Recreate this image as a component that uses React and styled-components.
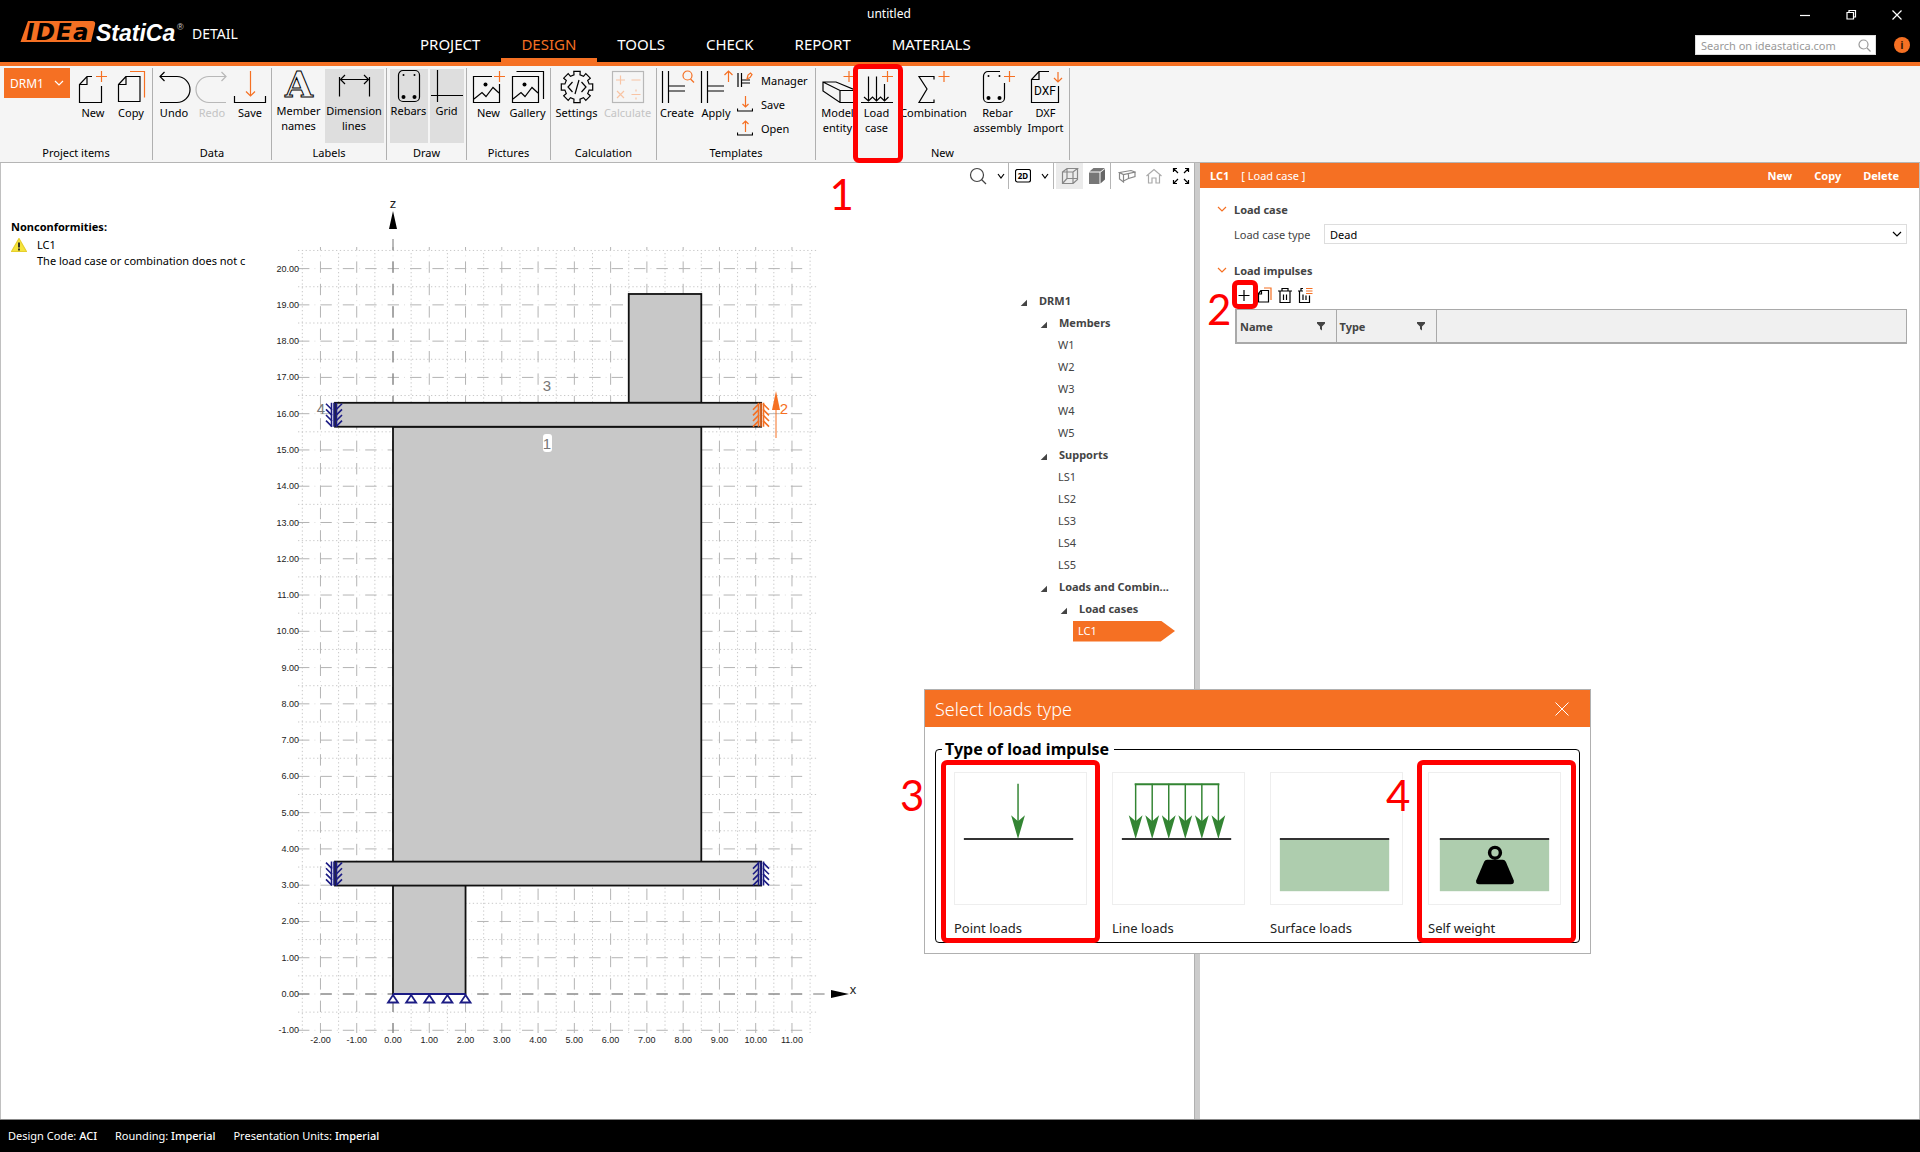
import styled, { createGlobalStyle, css } from 'styled-components';

const ORANGE = '#f57023';
const RED = '#ff0000';
const NAVY = '#1c1c84';

const GlobalStyle = createGlobalStyle`
	* {
		box-sizing: border-box;
	}

	body {
		margin: 0;
		font-family: 'Noto Sans', 'Open Sans', sans-serif;
		font-size: 11px;
		line-height: 15px;
		color: #000;
		background: #fff;
	}

	button,
	input,
	select {
		margin: 0;
		padding: 0;
		border: 0;
		background: none;
		color: inherit;
		font: inherit;
	}

	button {
		cursor: pointer;
	}

	svg {
		display: block;
		flex: none;
	}
`;

/* ---------- icons ---------- */

const Svg = ({ w = 34, h = w, color = 'currentColor', children, ...rest }) => (
	<svg width={w} height={h} viewBox={`0 0 ${w} ${h}`} fill="none" stroke={color} strokeWidth="1.2" aria-hidden="true" {...rest}>
		{children}
	</svg>
);

const Accent = ({ d }) => <path d={d} stroke={ORANGE} />;

const Plus = ({ x, y }) => <Accent d={`M${x} ${y - 5.5}v11M${x - 5.5} ${y}h11`} />;

const Chevron = ({ size = 10, color }) => (
	<Svg w={size} h={6} color={color}>
		<path d={`M1 1L${size / 2} 5L${size - 1} 1`} />
	</Svg>
);

const gearPath = (cx, cy) => {
	const points = [];
	for (let i = 0; i < 8; i++) {
		[
			[-0.24, 12.5],
			[-0.2, 16],
			[0.2, 16],
			[0.24, 12.5],
		].forEach(([shift, r]) => {
			const a = (i * Math.PI) / 4 + shift;
			points.push(`${(cx + r * Math.cos(a)).toFixed(1)} ${(cy + r * Math.sin(a)).toFixed(1)}`);
		});
	}
	return `M${points.join('L')}Z`;
};

const Dots = ({ points, r }) => points.map(([x, y]) => <circle key={`${x}-${y}`} cx={x} cy={y} r={r} fill="currentColor" stroke="none" />);

const icons = {
	newDoc: (
		<Svg>
			<path d="M16 6.5H11L3.5 14.5V32.5H25.5V16M11 6.5V14.5H3.5" />
			<Plus x={25.5} y={6.5} />
		</Svg>
	),
	copy: (
		<Svg>
			<path d="M12 6.5L4.5 14.5V31.5H26V6.5ZM12 6.5V14.5H4.5" />
			<Accent d="M16 1.5H30.5V27.5" />
		</Svg>
	),
	undo: (
		<Svg>
			<path d="M3 6.5H20A13 13 0 0 1 20 32.5H3M7.5 2L3 6.5L7.5 11" />
		</Svg>
	),
	redo: (
		<Svg>
			<path d="M31 6.5H14A13 13 0 0 0 14 32.5H31M26.5 2L31 6.5L26.5 11" stroke="#b8b8b8" />
		</Svg>
	),
	save: (
		<Svg>
			<Accent d="M17.5 1V26M13 21.5L17.5 26L22 21.5" />
			<path d="M1.5 26V32.5H32.5V26" />
		</Svg>
	),
	names: (
		<Svg>
			<text x="17" y="28" textAnchor="middle" fontFamily="DejaVu Serif" fontWeight="700" fontSize="36" strokeWidth="1">
				A
			</text>
		</Svg>
	),
	dimension: (
		<Svg>
			<path d="M2.5 8V27.5M32.5 8V27.5M3 10.5H32M8 6L3.5 10.5L8 15M27 6L31.5 10.5L27 15" />
		</Svg>
	),
	rebars: (
		<Svg>
			<rect x="6.5" y="1.5" width="21" height="31" rx="4.5" />
			<Dots points={[[11.5, 6], [22.5, 6]]} r={1} />
			<Dots points={[[11.5, 28], [22.5, 28]]} r={2} />
		</Svg>
	),
	grid: (
		<Svg>
			<path d="M7.5 1V33M1 26.5H33" />
		</Svg>
	),
	picture: (
		<Svg>
			<path d="M20 6.5H1.5V32.5H27.5V14M2 29L10 22.5L14 26.5L21 17.5L27 23" />
			<Dots points={[[13.5, 14.5]]} r={2} />
			<Plus x={27.5} y={6.5} />
		</Svg>
	),
	gallery: (
		<Svg>
			<path d="M1.5 6.5H27.5V32.5H1.5ZM2 29L10 22.5L14 26.5L21 17.5L27 23M5.5 1.5H32.5V29" />
			<Dots points={[[13.5, 14.5]]} r={2} />
		</Svg>
	),
	settings: (
		<Svg>
			<path d={gearPath(17, 17)} />
			<path d="M12.5 12L8 17L12.5 22M21.5 12L26 17L21.5 22M19 10L15 24" />
		</Svg>
	),
	calculate: (
		<Svg>
			<rect x="1.5" y="1.5" width="31" height="31" stroke="#b8b8b8" />
			<path d="M9.5 5.5v9M5 10h9M20.5 10h9M6 21l7 7M13 21l-7 7M20.5 24.5h9M25 19.5v2M25 27.5v2" stroke="#f8c4a4" />
		</Svg>
	),
	create: (
		<Svg w={36} h={34}>
			<path d="M3.5 1V33M9.5 1V33M9.5 16H26M9.5 21H26" />
			<circle cx="28.5" cy="5.5" r="4.5" stroke={ORANGE} />
			<Accent d="M31.5 9L35 12.5" />
		</Svg>
	),
	apply: (
		<Svg>
			<path d="M2.5 1V33M8.5 1V33M8.5 16H25M8.5 21H25" />
			<Accent d="M29.5 1V12M25.5 5L29.5 1L33.5 5" />
		</Svg>
	),
	entity: (
		<Svg>
			<path d="M2 12H15L34 20V32.5H19L2 21ZM2 12L19 20.5H34M19 20.5V32.5" />
			<Plus x={28} y={6.5} />
		</Svg>
	),
	loadCase: (
		<Svg>
			<path d="M1 32.5H33M8.5 6.5V31M16.5 6.5V31M24.5 14V31M4 27L8.5 31L12.5 27L16.5 31L20.5 27L24.5 31L28.5 27" />
			<Plus x={27.5} y={6.5} />
		</Svg>
	),
	combination: (
		<Svg>
			<path d="M17 9.5V6.5H2L10 19L2 32.5H17V29.5" />
			<Plus x={27} y={6.5} />
		</Svg>
	),
	rebarAssembly: (
		<Svg>
			<path d="M19 1.5H7A4.5 4.5 0 0 0 2.5 6V28A4.5 4.5 0 0 0 7 32.5H19A4.5 4.5 0 0 0 23.5 28V13" />
			<Dots points={[[7.5, 6], [18.5, 6]]} r={1} />
			<Dots points={[[7.5, 28], [18.5, 28]]} r={2} />
			<Plus x={28.5} y={6.5} />
		</Svg>
	),
	dxf: (
		<Svg>
			<path d="M20 1.5H10L2.5 9.5V32.5H29.5V16M10 1.5V9.5H2.5" />
			<text x="16" y="25" textAnchor="middle" fontFamily="Liberation Sans Narrow, Roboto" fontSize="12" fill="currentColor" stroke="none">
				DXF
			</text>
			<Accent d="M29 2V12M25 8L29 12L33 8" />
		</Svg>
	),
	manager: (
		<Svg w={16}>
			<path d="M1 1V15M4.5 1V15M4.5 8H13M4.5 11H13" />
			<path d="M10 7L11 3L13.5 1L15 2.5L13 5.5Z" stroke={ORANGE} />
		</Svg>
	),
	saveSmall: (
		<Svg w={16}>
			<Accent d="M8.5 0V11M5.5 8L8.5 11L11.5 8" />
			<path d="M0.5 12.5V15H15.5V12.5" />
		</Svg>
	),
	openSmall: (
		<Svg w={16}>
			<Accent d="M8.5 12V1M5.5 4L8.5 1L11.5 4" />
			<path d="M0.5 12.5V15H15.5V12.5" />
		</Svg>
	),
	search: (
		<Svg w={18} color="#444">
			<circle cx="8" cy="8" r="6.5" />
			<path d="M12.5 12.5L17 17" />
		</Svg>
	),
	mode2d: (
		<Svg w={16} h={14}>
			<rect x="0.5" y="0.5" width="15" height="12.5" rx="2" />
			<text x="8" y="10" textAnchor="middle" fontFamily="Noto Sans" fontSize="8" fontWeight="700" fill="currentColor" stroke="none">
				2D
			</text>
		</Svg>
	),
	wireCube: (
		<Svg w={18} color="#888">
			<path d="M1.5 5H12V16.5H1.5ZM1.5 5L6 1.5H16.5L12 5M16.5 1.5V12.5L12 16.5M6 1.5V11.5H16.5M6 11.5L1.5 16.5" />
		</Svg>
	),
	solidCube: (
		<Svg w={18}>
			<path d="M1 5.5H11.5V17H1Z" fill="#777" stroke="none" />
			<path d="M1.5 4.5L5.5 1H17L12.5 4.5Z" fill="#777" stroke="none" />
			<path d="M12.5 5.5L17 2V12.5L12.5 16.5Z" fill="#666" stroke="none" />
		</Svg>
	),
	section: (
		<Svg w={18} h={14} color="#888">
			<path d="M1.5 3.5L13 1.5L17 3L5.5 5.5ZM1.5 3.5V10L5.5 13V5.5M5.5 12L10.5 9.5V4.5M17 3V7.5L10.5 9.5" />
		</Svg>
	),
	home: (
		<Svg w={16} color="#aaa">
			<path d="M0.5 8L8 1.5L15.5 8M2.5 7V15H6V10H10V15H13.5V7" />
		</Svg>
	),
	fullscreen: (
		<Svg w={18}>
			<path d="M1.5 5V1.5H5M1.5 1.5L6 6M13 1.5H16.5V5M16.5 1.5L12 6M1.5 13V16.5H5M1.5 16.5L6 12M13 16.5H16.5V13M16.5 16.5L12 12" />
		</Svg>
	),
	add: (
		<Svg w={14} h={16}>
			<path d="M7 3V14M1.5 8.5H12.5" />
		</Svg>
	),
	copySmall: (
		<Svg w={16}>
			<path d="M4 3.5L1.5 6.5V15H11.5V3.5ZM4.5 3.5V7H1.5" />
			<Accent d="M7 1H14V13" />
		</Svg>
	),
	trash: (
		<Svg w={16}>
			<path d="M1 4H15M5 4V1.5H11V4M3 4V15.5H13V4M6.5 7.5V13M9.5 7.5V13" />
		</Svg>
	),
	trashAll: (
		<Svg w={16}>
			<path d="M1 4H6M4 4V1.5H6M2.5 4V15.5H12.5V8.5M6 7.5V13M9 8.5V13" />
			<Accent d="M9 1.5H15.5M9 4H15.5M9 6.5H15.5" />
		</Svg>
	),
	filter: (
		<Svg w={10}>
			<path d="M1 1H9V2.5L6 5.5V9.5L4 8V5.5L1 2.5Z" fill="currentColor" stroke="none" />
		</Svg>
	),
	warning: (
		<Svg w={16} h={14}>
			<path d="M8 0.5L15.5 13.5H0.5Z" fill="#f5e43c" stroke="#e6cf2e" />
			<path d="M8 4.5V9.5M8 10.5V12.5" stroke="#222" strokeWidth="1.8" />
		</Svg>
	),
};

/* ---------- numbered callouts ---------- */

const CalloutFrame = styled.span`
	position: absolute;
	z-index: 3;
	inset: ${({ $inset }) => $inset};
	border: 5px solid ${RED};
	border-radius: 6px;
	pointer-events: none;
`;

const CalloutNumber = styled.span`
	position: absolute;
	left: ${({ $left }) => $left}px;
	top: ${({ $top }) => $top}px;
	font: 400 42px/42px Lato, sans-serif;
	color: ${RED};
`;

const Callout = ({ number, inset, left, top }) => (
	<CalloutFrame $inset={inset} aria-hidden="true">
		<CalloutNumber $left={left} $top={top}>
			{number}
		</CalloutNumber>
	</CalloutFrame>
);

/* ---------- header ---------- */

const Header = styled.header`
	display: grid;
	grid-template-columns: 400px 1fr auto;
	height: 66px;
	border-bottom: 4px solid ${ORANGE};
	background: #000;
	color: #fff;
`;

const Brand = styled.div`
	display: flex;
	align-items: center;
	padding: 2px 0 0 20px;
`;

const Product = styled.span`
	padding: 4px 0 0 7px;
	font-size: 14px;
	line-height: 18px;
`;

const HeaderMain = styled.div`
	display: flex;
	flex-direction: column;
	justify-content: space-between;
`;

const DocumentTitle = styled.div`
	padding: 5px 0 0 467px;
	font-size: 12px;
	line-height: 18px;
`;

const Tabs = styled.nav`
	display: flex;
`;

const Tab = styled.button`
	height: 32px;
	padding: 1px 21px 2px 20px;
	border-bottom: 4px solid transparent;
	font-size: 15px;
	line-height: 20px;
	${({ $active }) =>
		$active &&
		css`
			border-color: ${ORANGE};
			color: ${ORANGE};
		`}
`;

const HeaderSide = styled.div`
	display: flex;
	flex-direction: column;
	gap: 13px;
	padding: 8px 10px 0 0;
`;

const WindowButtons = styled.div`
	display: flex;
	justify-content: flex-end;
	gap: 32px;
	padding-right: 6px;
`;

const SearchRow = styled.div`
	display: flex;
	align-items: center;
	gap: 18px;
`;

const SearchBox = styled.label`
	display: flex;
	align-items: center;
	width: 181px;
	height: 20px;
	padding: 0 4px 0 5px;
	border: 1px solid #ddd;
	background: #fff;
	color: #999;

	input {
		flex: 1;
		min-width: 0;
		outline: 0;
		color: #333;
	}

	input::placeholder {
		color: #999;
		opacity: 1;
	}
`;

const InfoButton = styled.button`
	width: 16px;
	height: 16px;
	border-radius: 50%;
	background: ${ORANGE};
	color: #3a1a05;
	font-weight: 700;
	line-height: 16px;
`;

const Logo = () => (
	<svg width="165" height="26" viewBox="0 0 165 26" role="img" aria-label="IDEA StatiCa">
		<path d="M8 2H72Q76 2 75 6L71 23H0.5Z" fill={ORANGE} />
		<text x="6 16 36 53" y="21" fill="#000" fontFamily="DejaVu Sans" fontWeight="700" fontStyle="italic" fontSize="23">
			IDEa
		</text>
		<text x="76" y="22" fill="#fff" fontFamily="Liberation Sans" fontWeight="700" fontStyle="italic" fontSize="23">
			StatiCa
		</text>
		<text x="157" y="11" fill="#ccc" fontFamily="Liberation Sans" fontSize="9">
			®
		</text>
	</svg>
);

const tabs = ['PROJECT', 'DESIGN', 'TOOLS', 'CHECK', 'REPORT', 'MATERIALS'];

const AppHeader = () => (
	<Header>
		<Brand>
			<Logo />
			<Product>DETAIL</Product>
		</Brand>
		<HeaderMain>
			<DocumentTitle>untitled</DocumentTitle>
			<Tabs>
				{tabs.map((tab) => (
					<Tab key={tab} $active={tab === 'DESIGN'}>
						{tab}
					</Tab>
				))}
			</Tabs>
		</HeaderMain>
		<HeaderSide>
			<WindowButtons>
				<button aria-label="Minimize">
					<Svg w={14} h={14}>
						<path d="M2 7.5H12" />
					</Svg>
				</button>
				<button aria-label="Restore">
					<Svg w={14} h={14}>
						<path d="M3 4.5H9.5V11H3ZM5 4.5V2.5H11.5V9H9.5" />
					</Svg>
				</button>
				<button aria-label="Close">
					<Svg w={14} h={14}>
						<path d="M2.5 2.5L11.5 11.5M11.5 2.5L2.5 11.5" />
					</Svg>
				</button>
			</WindowButtons>
			<SearchRow>
				<SearchBox>
					<input type="search" placeholder="Search on ideastatica.com" aria-label="Search on ideastatica.com" />
					<Svg w={13}>
						<circle cx="5.5" cy="5.5" r="4.5" />
						<path d="M9 9L12.5 12.5" />
					</Svg>
				</SearchBox>
				<InfoButton aria-label="Info">i</InfoButton>
			</SearchRow>
		</HeaderSide>
	</Header>
);

/* ---------- ribbon ---------- */

const Ribbon = styled.div`
	display: flex;
	height: 97px;
	padding: 2px 0;
	border-bottom: 1px solid #b5b5b5;
	background: #f5f5f5;
`;

const Group = styled.section`
	display: flex;
	flex-direction: column;
	justify-content: space-between;
	flex: none;
	width: ${({ $width }) => $width}px;
	border-right: 1px solid #b0b0b0;
`;

const GroupItems = styled.div`
	display: flex;
	justify-content: center;
	align-items: flex-start;
	gap: ${({ $gap = 0 }) => $gap}px;
`;

const GroupLabel = styled.h2`
	margin: 0;
	font-size: 11px;
	font-weight: 400;
	line-height: 15px;
	text-align: center;
`;

const RibbonButton = styled.button`
	position: relative;
	display: flex;
	flex-direction: column;
	align-items: center;
	gap: ${({ $tight }) => ($tight ? 0 : 1)}px;
	flex: none;
	width: ${({ $width = 38 }) => $width}px;
	height: 74px;
	margin-top: 1px;
	padding-top: ${({ $tight }) => ($tight ? 0 : 1)}px;
	background: ${({ $pressed }) => ($pressed ? '#dedede' : 'none')};
	color: ${({ disabled }) => (disabled ? '#c4c4c4' : '#000')};
	line-height: 15px;
	white-space: pre-line;
`;

const ProjectSelect = styled.label`
	position: relative;
	display: flex;
	align-items: center;
	width: 66px;
	height: 30px;
	margin: 0 4px 0 2px;
	background: ${ORANGE};
	color: #fff;
	font-size: 12px;

	select {
		width: 100%;
		height: 100%;
		padding-left: 6px;
		appearance: none;
	}

	svg {
		position: absolute;
		right: 6px;
	}
`;

const SmallButtons = styled.div`
	display: flex;
	flex-direction: column;
	padding-left: 2px;
`;

const SmallButton = styled.button`
	display: flex;
	align-items: center;
	gap: 8px;
	width: 78px;
	height: 24px;
`;

const ribbonGroups = [
	{
		title: 'Project items',
		width: 153,
		items: [
			{ label: 'New', icon: 'newDoc' },
			{ label: 'Copy', icon: 'copy' },
		],
		lead: (
			<ProjectSelect>
				<select aria-label="Project item" defaultValue="DRM1">
					<option>DRM1</option>
				</select>
				<Chevron />
			</ProjectSelect>
		),
	},
	{
		title: 'Data',
		width: 119,
		items: [
			{ label: 'Undo', icon: 'undo' },
			{ label: 'Redo', icon: 'redo', disabled: true },
			{ label: 'Save', icon: 'save' },
		],
	},
	{
		title: 'Labels',
		width: 115,
		gap: 2,
		items: [
			{ label: 'Member\nnames', icon: 'names', tight: true, width: 48 },
			{ label: 'Dimension\nlines', icon: 'dimension', tight: true, pressed: true, width: 59 },
		],
	},
	{
		title: 'Draw',
		width: 80,
		gap: 2,
		items: [
			{ label: 'Rebars', icon: 'rebars', tight: true, pressed: true },
			{ label: 'Grid', icon: 'grid', tight: true, pressed: true, width: 34 },
		],
	},
	{
		title: 'Pictures',
		width: 84,
		items: [
			{ label: 'New', icon: 'picture' },
			{ label: 'Gallery', icon: 'gallery', width: 40 },
		],
	},
	{
		title: 'Calculation',
		width: 106,
		items: [
			{ label: 'Settings', icon: 'settings', width: 48 },
			{ label: 'Calculate', icon: 'calculate', disabled: true, width: 54 },
		],
	},
	{
		title: 'Templates',
		width: 159,
		items: [
			{ label: 'Create', icon: 'create', width: 40 },
			{ label: 'Apply', icon: 'apply' },
		],
		tail: [
			{ label: 'Manager', icon: 'manager' },
			{ label: 'Save', icon: 'saveSmall' },
			{ label: 'Open', icon: 'openSmall' },
		],
	},
	{
		title: 'New',
		width: 254,
		items: [
			{ label: 'Model\nentity', icon: 'entity', width: 40 },
			{
				label: 'Load\ncase',
				icon: 'loadCase',
				callout: <Callout number="1" inset="-5px -7px -20px -5px" left={-28} top={104} />,
			},
			{ label: 'Combination', icon: 'combination', width: 76 },
			{ label: 'Rebar\nassembly', icon: 'rebarAssembly', width: 52 },
			{ label: 'DXF\nImport', icon: 'dxf', width: 44 },
		],
	},
];

const AppRibbon = () => (
	<Ribbon>
		{ribbonGroups.map((group) => (
			<Group key={group.title} $width={group.width}>
				<GroupItems $gap={group.gap}>
					{group.lead}
					{group.items.map((item) => (
						<RibbonButton key={item.icon} $width={item.width} $tight={item.tight} $pressed={item.pressed} disabled={item.disabled}>
							{icons[item.icon]}
							{item.label}
							{item.callout}
						</RibbonButton>
					))}
					{group.tail && (
						<SmallButtons>
							{group.tail.map((item) => (
								<SmallButton key={item.icon}>
									{icons[item.icon]}
									{item.label}
								</SmallButton>
							))}
						</SmallButtons>
					)}
				</GroupItems>
				<GroupLabel>{group.title}</GroupLabel>
			</Group>
		))}
	</Ribbon>
);

/* ---------- drawing ---------- */

const UNIT = 36.27;
const px = (value) => value * UNIT;
const range = (from, to) => Array.from({ length: to - from + 1 }, (_, i) => from + i);

const LEFT = -95;
const TOP = -747;
const BOTTOM = 39;
const DASH = '11.4 11';
const DOT = '0 16.4 1 5';

const majorLines = [
	...range(-2, 11).map((n) => ({ d: `M${px(n)} ${TOP}V${BOTTOM}`, offset: 8 })),
	...range(-1, 20).map((n) => ({ d: `M${LEFT} ${-px(n)}H412`, offset: 0 })),
];

const Grid = () => (
	<g fill="none">
		<g stroke="#c8c8c8" strokeDasharray="1.3 2.5">
			{range(-3, 11).map((n) => (
				<path key={`x${n}`} d={`M${px(n + 0.5)} ${TOP + 6}V${BOTTOM}`} />
			))}
			{range(-1, 20).map((n) => (
				<path key={`z${n}`} d={`M${LEFT} ${-px(n + 0.5)}H424`} />
			))}
		</g>
		{majorLines.map(({ d, offset }) => (
			<g key={d} strokeDashoffset={offset}>
				<path d={d} stroke="#b4b4b4" strokeDasharray={DASH} />
				<path d={d} stroke="#ddd" strokeDasharray={DOT} />
			</g>
		))}
		<g stroke="#777" strokeDasharray={DASH}>
			<path d={`M0 -755V${BOTTOM}`} />
			<path d={`M${LEFT} 0H436`} />
		</g>
	</g>
);

// herringbone mark of a line support, `flip` turns the strokes the other way
const LineSupport = ({ x, z, color = NAVY, flip = false }) => {
	const y = -px(z);
	return (
		<g stroke={color} strokeWidth="1.6" fill="none">
			<path d={`M${x - 2.5} ${y}V${y + 24}M${x} ${y}V${y + 24}M${x + 2.5} ${y}V${y + 24}`} />
			{range(0, 3).map((n) => {
				const top = y + n * 5.6;
				return flip ? (
					<path key={n} d={`M${x - 8} ${top + 7}L${x - 2} ${top + 1}M${x + 2} ${top + 1}L${x + 8} ${top + 7}`} />
				) : (
					<path key={n} d={`M${x - 8} ${top + 1}L${x - 2} ${top + 7}M${x + 8} ${top + 1}L${x + 2} ${top + 7}`} />
				);
			})}
		</g>
	);
};

const bodies = [
	{ x: 6.5, z: 19.3, w: 2, h: 3 },
	{ x: 0, z: 15.64, w: 8.5, h: 12 },
	{ x: 0, z: 3, w: 2, h: 3 },
	{ x: -1.6, z: 16.3, w: 11.75, h: 0.66 },
	{ x: -1.6, z: 3.65, w: 11.75, h: 0.66 },
];

const Drawing = () => (
	<svg width="620" height="870" viewBox="-144 -805 620 870" role="img" aria-label="Wall model">
		<Grid />
		<g fontFamily="Liberation Sans" fontSize="9" fill="#222">
			{range(-1, 20).map((n) => (
				<text key={n} x="-94" y={3 - px(n)} textAnchor="end">
					{n.toFixed(2)}
				</text>
			))}
			{range(-2, 11).map((n) => (
				<text key={n} x={px(n)} y="49" textAnchor="middle">
					{n.toFixed(2)}
				</text>
			))}
		</g>
		<g fontFamily="Liberation Sans" fontSize="13" fill="#222" textAnchor="middle">
			<text x="0" y="-786">
				z
			</text>
			<text x="460" y="0">
				x
			</text>
		</g>
		<path d="M0 -783L4 -765H-4ZM456 0L438 4V-4Z" fill="#000" />
		{bodies.map(({ x, z, w, h }) => (
			<rect key={`${x}:${z}`} x={px(x)} y={-px(z)} width={px(w)} height={px(h)} fill="#c8c8c8" stroke="#111" strokeWidth="1.8" />
		))}
		<g fontFamily="Liberation Sans" fontSize="15" fill="#777" textAnchor="middle">
			<text x="154" y="-603">
				3
			</text>
			<rect x="150" y="-560" width="9" height="18" rx="3" fill="#fff" />
			<text x="154" y="-545">
				1
			</text>
			<text x="-72" y="-580">
				4
			</text>
			<text x="391" y="-580" fill={ORANGE}>
				2
			</text>
		</g>
		<LineSupport x={-59} z={16.3} />
		<LineSupport x={-59} z={3.65} />
		<LineSupport x={368} z={3.65} flip />
		<LineSupport x={368} z={16.3} color={ORANGE} flip />
		<path d="M383 -603L387 -584H379Z" fill={ORANGE} />
		<path d="M383 -590V-556" stroke={ORANGE} />
		<g stroke={NAVY} strokeWidth="1.8" fill="none">
			<path d={`M0 0H${px(2)}`} />
			{range(0, 4).map((n) => (
				<path key={n} d={`M${px(n / 2)} 1L${px(n / 2) + 5} 8.5H${px(n / 2) - 5}Z`} fill="#fff" />
			))}
		</g>
	</svg>
);

/* ---------- workspace ---------- */

const Page = styled.div`
	display: flex;
	flex-direction: column;
	min-height: 100vh;
	position: relative;
`;

const Workspace = styled.main`
	display: flex;
	flex: 1;
	border-left: 1px solid #c0c0c0;
`;

const View = styled.section`
	display: flex;
	flex-direction: column;
	flex: 1;
	min-width: 0;
`;

const ViewToolbar = styled.div`
	display: flex;
	justify-content: flex-end;
	height: 26px;
`;

const ToolGroup = styled.div`
	display: flex;
	padding-left: 2px;

	& + & {
		border-left: 1px solid #b5b5b5;
	}
`;

const ToolButton = styled.button`
	display: flex;
	align-items: center;
	justify-content: center;
	gap: 10px;
	width: ${({ $width = 27 }) => $width}px;
	background: ${({ $pressed }) => ($pressed ? '#ebebeb' : 'none')};
`;

const Stage = styled.div`
	display: flex;
	flex: 1;
`;

const Nonconformities = styled.aside`
	flex: none;
	width: 248px;
	padding: 30px 0 0 10px;
	line-height: 16px;
`;

const AsideTitle = styled.h2`
	margin: 0 0 2px;
	font-size: 11px;
	font-weight: 700;
	line-height: 16px;
`;

const Issue = styled.div`
	display: grid;
	grid-template-columns: 26px 1fr;
	overflow: hidden;
	white-space: nowrap;

	svg {
		grid-row: span 2;
		margin-top: 1px;
	}
`;

const Tree = styled.ul`
	flex: none;
	width: 174px;
	margin: 0 0 0 auto;
	padding: 101px 0 0;
	list-style: none;
	line-height: 22px;
	color: #444;
`;

const TreeRow = styled.li`
	display: flex;
	align-items: center;
	gap: 12px;
	height: 22px;
	padding-left: ${({ $level }) => $level * 20}px;
	font-weight: ${({ $bold }) => ($bold ? 700 : 400)};

	&::before {
		content: '';
		display: ${({ $bold }) => ($bold ? 'block' : 'none')};
		width: 7px;
		height: 7px;
		margin-top: 3px;
		background: #444;
		clip-path: polygon(100% 10%, 100% 100%, 10% 100%);
	}
`;

const LeafLabel = styled.span`
	margin-left: -2px;
`;

const SelectedNode = styled.span`
	width: 102px;
	height: 21px;
	margin-left: -7px;
	padding-left: 5px;
	background: ${ORANGE};
	clip-path: polygon(0 0, 86% 0, 100% 50%, 86% 100%, 0 100%);
	color: #fff;
	line-height: 20px;
`;

const leaves = (names) => names.map((label) => ({ label, level: 2 }));

const treeRows = [
	{ label: 'DRM1', level: 0, bold: true },
	{ label: 'Members', level: 1, bold: true },
	...leaves(['W1', 'W2', 'W3', 'W4', 'W5']),
	{ label: 'Supports', level: 1, bold: true },
	...leaves(['LS1', 'LS2', 'LS3', 'LS4', 'LS5']),
	{ label: 'Loads and Combin...', level: 1, bold: true },
	{ label: 'Load cases', level: 2, bold: true },
	{ label: 'LC1', level: 3, selected: true },
];

const ModelView = () => (
	<View>
		<ViewToolbar>
			<ToolGroup>
				<ToolButton $width={42} aria-label="Zoom">
					{icons.search}
					<Chevron size={8} />
				</ToolButton>
			</ToolGroup>
			<ToolGroup>
				<ToolButton $width={42} aria-label="View mode">
					{icons.mode2d}
					<Chevron size={8} />
				</ToolButton>
			</ToolGroup>
			<ToolGroup>
				<ToolButton $pressed aria-label="Wireframe">
					{icons.wireCube}
				</ToolButton>
				<ToolButton aria-label="Solid">{icons.solidCube}</ToolButton>
			</ToolGroup>
			<ToolGroup>
				<ToolButton aria-label="Section">{icons.section}</ToolButton>
				<ToolButton aria-label="Home view">{icons.home}</ToolButton>
				<ToolButton aria-label="Full screen">{icons.fullscreen}</ToolButton>
			</ToolGroup>
		</ViewToolbar>
		<Stage>
			<Nonconformities>
				<AsideTitle>Nonconformities:</AsideTitle>
				<Issue>
					{icons.warning}
					<span>LC1</span>
					<span>The load case or combination does not c</span>
				</Issue>
			</Nonconformities>
			<Drawing />
			<Tree>
				{treeRows.map(({ label, level, bold, selected }) => (
					<TreeRow key={label} $level={level} $bold={bold}>
						{selected && <SelectedNode>{label}</SelectedNode>}
						{!selected && (bold ? label : <LeafLabel>{label}</LeafLabel>)}
					</TreeRow>
				))}
			</Tree>
		</Stage>
	</View>
);

/* ---------- properties ---------- */

const Splitter = styled.div`
	flex: none;
	width: 6px;
	border-left: 1px solid #b0b0b0;
	background: #ccc;
`;

const Properties = styled.section`
	flex: none;
	width: 720px;
	border-right: 1px solid #c0c0c0;
	color: #444;
`;

const PropertiesHeader = styled.header`
	display: flex;
	align-items: center;
	height: 25px;
	padding: 0 20px 0 10px;
	background: ${ORANGE};
	color: #fff;

	h2 {
		margin: 0 12px 0 0;
		font-size: 11px;
	}
`;

const HeaderActions = styled.div`
	display: flex;
	gap: 22px;
	margin-left: auto;
	font-weight: 700;
`;

const PropertiesBody = styled.div`
	padding: 13px 12px 0 17px;
`;

const SectionTitle = styled.h3`
	display: flex;
	align-items: center;
	gap: 7px;
	height: 16px;
	margin: 0;
	font-size: 11px;
	font-weight: 700;
`;

const Field = styled.label`
	display: flex;
	align-items: center;
	margin: 7px 0 18px;
	padding-left: 17px;
`;

const FieldName = styled.span`
	width: 90px;
`;

const SelectWrap = styled.span`
	position: relative;
	display: flex;
	align-items: center;
	flex: 1;
	height: 20px;
	border: 1px solid #ddd;
	color: #000;

	select {
		width: 100%;
		height: 18px;
		padding-left: 5px;
		appearance: none;
	}

	svg {
		position: absolute;
		right: 4px;
	}
`;

const TableTools = styled.div`
	display: flex;
	gap: 5px;
	padding: 9px 0 6px 20px;
	color: #000;

	button {
		position: relative;
		width: 15px;
		height: 16px;
	}
`;

const ImpulseTable = styled.table`
	width: calc(100% - 18px);
	margin-left: 18px;
	border-collapse: collapse;
	border: 1px solid #a9a9a9;
	border-width: 1px 1px 2px 2px;
	background: #f0f0f0;

	th {
		height: 33px;
		padding: 0;
		border-right: 1px solid #a9a9a9;
		text-align: left;
	}
`;

const ColumnHead = styled.div`
	display: flex;
	align-items: center;
	justify-content: space-between;
	padding: 1px 10px 0 3px;
`;

const LoadCaseProperties = () => (
	<Properties>
		<PropertiesHeader>
			<h2>LC1</h2>
			<span>[ Load case ]</span>
			<HeaderActions>
				<button>New</button>
				<button>Copy</button>
				<button>Delete</button>
			</HeaderActions>
		</PropertiesHeader>
		<PropertiesBody>
			<SectionTitle>
				<Chevron color={ORANGE} />
				Load case
			</SectionTitle>
			<Field>
				<FieldName>Load case type</FieldName>
				<SelectWrap>
					<select defaultValue="Dead">
						<option>Dead</option>
					</select>
					<Chevron />
				</SelectWrap>
			</Field>
			<SectionTitle>
				<Chevron color={ORANGE} />
				Load impulses
			</SectionTitle>
			<TableTools>
				<button aria-label="Add">
					{icons.add}
					<Callout number="2" inset="-7px -6px -6px -5px" left={-30} top={3} />
				</button>
				<button aria-label="Copy">{icons.copySmall}</button>
				<button aria-label="Delete">{icons.trash}</button>
				<button aria-label="Delete all">{icons.trashAll}</button>
			</TableTools>
			<ImpulseTable>
				<colgroup>
					<col width="100" />
					<col width="100" />
					<col />
				</colgroup>
				<thead>
					<tr>
						{['Name', 'Type'].map((name) => (
							<th key={name} scope="col">
								<ColumnHead>
									{name}
									<button aria-label={`Filter ${name}`}>{icons.filter}</button>
								</ColumnHead>
							</th>
						))}
						<th aria-label="Empty" />
					</tr>
				</thead>
			</ImpulseTable>
		</PropertiesBody>
	</Properties>
);

/* ---------- dialog ---------- */

const DialogWindow = styled.section`
	position: absolute;
	z-index: 2;
	left: 924px;
	top: 689px;
	width: 667px;
	border: 1px solid #b0b0b0;
	background: #fff;
`;

const DialogHeader = styled.header`
	display: flex;
	align-items: center;
	justify-content: space-between;
	height: 37px;
	padding: 0 21px 0 10px;
	background: ${ORANGE};
	color: #fff;

	h2 {
		margin: 0;
		font-size: 18px;
		font-weight: 300;
		line-height: 22px;
	}
`;

const TypeFieldset = styled.fieldset`
	display: flex;
	gap: 25px;
	height: 204px;
	margin: 12px 10px 10px;
	padding: 13px 0 0 18px;
	border: 1px solid #000;
	border-radius: 4px;

	legend {
		margin-left: -12px;
		padding: 0 5px 0 3px;
		font-size: 16px;
		font-weight: 700;
		line-height: 20px;
	}
`;

const TypeCard = styled.button`
	position: relative;
	display: flex;
	flex-direction: column;
	gap: 14px;
	width: 133px;
	height: 168px;
	font-size: 13px;
	line-height: 18px;
	text-align: left;
	color: #222;

	& > svg {
		border: 1px solid #eee;
	}
`;

const LoadArrow = ({ x }) => (
	<>
		<path d={`M${x} 11V62`} stroke="#338533" strokeWidth="1.5" />
		<path d={`M${x - 7} 43L${x} 49L${x + 7} 43L${x} 67Z`} fill="#338533" />
	</>
);

const Beam = ({ x = 9 }) => <path d={`M${x} 67H${x + 111}`} stroke="#333" strokeWidth="2" />;

const Soil = ({ x = 9 }) => <rect x={x} y="67" width="111" height="53" fill="#aecdae" />;

const loadTypes = [
	{
		label: 'Point loads',
		art: (
			<>
				<Beam />
				<LoadArrow x={64} />
			</>
		),
		callout: <Callout number="3" inset="-12px -13px -3px -13px" left={-46} top={9} />,
	},
	{
		label: 'Line loads',
		art: (
			<>
				<Beam />
				<path d="M22 11.5H108" stroke="#338533" strokeWidth="2" />
				{range(0, 5).map((n) => (
					<LoadArrow key={n} x={23 + n * 16.8} />
				))}
			</>
		),
	},
	{
		label: 'Surface loads',
		art: (
			<>
				<Soil />
				<Beam />
			</>
		),
	},
	{
		label: 'Self weight',
		art: (
			<>
				<Soil x={11} />
				<Beam x={11} />
				<circle cx="67" cy="81" r="5.5" fill="none" stroke="#000" strokeWidth="3.5" />
				<path d="M59 88H75Q77 88 78 90L86 109Q87 113 83 113H51Q47 113 48 109L56 90Q57 88 59 88Z" fill="#000" />
			</>
		),
		callout: <Callout number="4" inset="-12px -15px -3px -11px" left={-36} top={9} />,
	},
];

const LoadTypeDialog = () => (
	<DialogWindow role="dialog" aria-label="Select loads type">
		<DialogHeader>
			<h2>Select loads type</h2>
			<button aria-label="Close">
				<Svg w={14} h={14} strokeWidth="1">
					<path d="M0.5 0.5L13.5 13.5M13.5 0.5L0.5 13.5" />
				</Svg>
			</button>
		</DialogHeader>
		<TypeFieldset>
			<legend>Type of load impulse</legend>
			{loadTypes.map(({ label, art, callout }) => (
				<TypeCard key={label}>
					<svg width="133" height="133" viewBox="0 0 133 133" aria-hidden="true">
						{art}
					</svg>
					{label}
					{callout}
				</TypeCard>
			))}
		</TypeFieldset>
	</DialogWindow>
);

/* ---------- status bar ---------- */

const StatusBar = styled.footer`
	display: flex;
	gap: 18px;
	height: 33px;
	padding: 8px;
	border-top: 1px solid #888;
	background: #000;
	color: #fff;

	b {
		font-weight: 500;
	}
`;

const App = () => (
	<>
		<GlobalStyle />
		<Page>
			<AppHeader />
			<AppRibbon />
			<Workspace>
				<ModelView />
				<Splitter />
				<LoadCaseProperties />
			</Workspace>
			<LoadTypeDialog />
			<StatusBar>
				<span>
					Design Code: <b>ACI</b>
				</span>
				<span>
					Rounding: <b>Imperial</b>
				</span>
				<span>
					Presentation Units: <b>Imperial</b>
				</span>
			</StatusBar>
		</Page>
	</>
);

export default App;
